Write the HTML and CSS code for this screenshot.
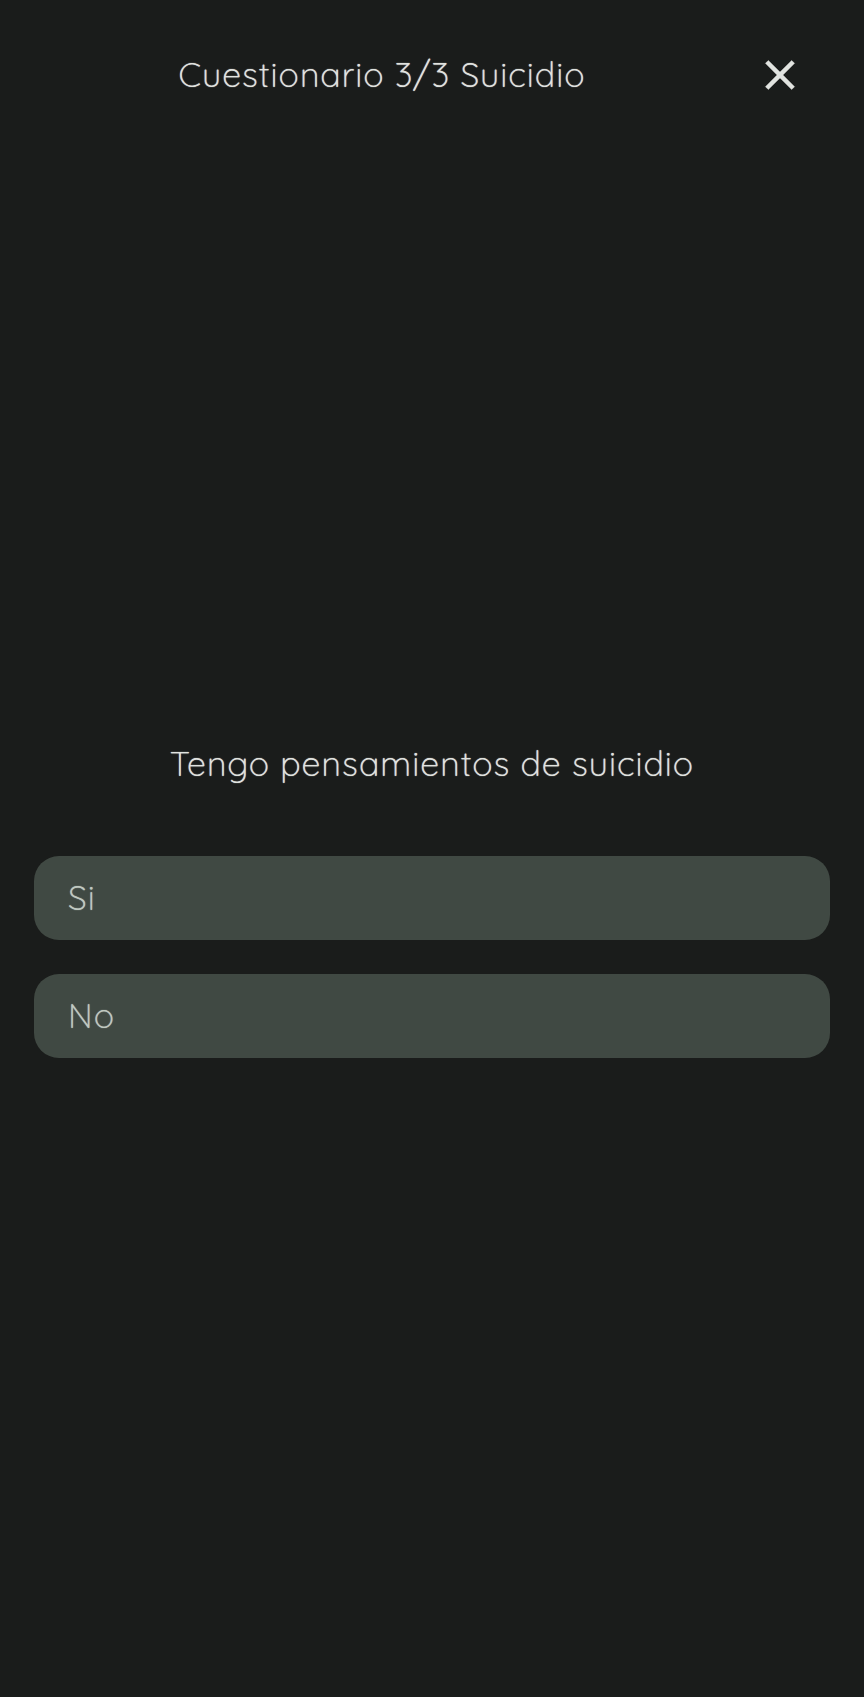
FILE: index.html
```html
<!DOCTYPE html>
<html lang="es">
<head>
<meta charset="utf-8">
<meta name="viewport" content="width=device-width, initial-scale=1">
<title>Cuestionario 3/3 Suicidio</title>
<link rel="stylesheet" href="styles.css">
</head>
<body>
<header class="top-bar">
  <h1 class="title">Cuestionario 3/3 Suicidio</h1>
  <button class="close" type="button" aria-label="Cerrar">
    <svg class="close-icon" viewBox="0 0 24 24" aria-hidden="true"><path d="M19 6.41 17.59 5 12 10.59 6.41 5 5 6.41 10.59 12 5 17.59 6.41 19 12 13.41 17.59 19 19 17.59 13.41 12z"/></svg>
  </button>
</header>
<main class="question">
  <h2 class="prompt">Tengo pensamientos de suicidio</h2>
  <div class="answers">
    <button class="answer" type="button">Si</button>
    <button class="answer" type="button">No</button>
  </div>
</main>
</body>
</html>
```
FILE: styles.css
```css
* {
  box-sizing: border-box;
}

body {
  margin: 0;
  min-height: 100vh;
  display: flex;
  flex-direction: column;
  background: #1a1c1b;
  color: #e1e3e0;
  font-family: Quicksand, Lato, sans-serif;
  font-size: 34px;
  font-weight: 300;
  line-height: 48px;
}

.top-bar {
  display: flex;
  align-items: center;
  padding: 24px 34px;
}

.title,
.prompt,
.answer {
  letter-spacing: 1px;
  text-shadow: 0 0 1px currentColor;
}

.title,
.prompt {
  margin: 0;
  font-size: inherit;
  font-weight: inherit;
  text-align: center;
}

.title {
  flex: 1;
}

.close {
  display: flex;
  align-items: center;
  justify-content: center;
  width: 100px;
  height: 102px;
  padding: 0;
  border: 0;
  background: none;
  color: inherit;
}

.close-icon {
  width: 50px;
  height: 50px;
  fill: currentColor;
  stroke: currentColor;
  stroke-width: 0.2;
  stroke-linejoin: round;
}

.question {
  flex: 1;
  display: flex;
  flex-direction: column;
  justify-content: center;
  gap: 68px;
  padding: 0 34px 50px;
}

.answers {
  display: flex;
  flex-direction: column;
  gap: 34px;
}

.answer {
  height: 84px;
  padding: 0 34px;
  border: 0;
  border-radius: 25px;
  background: #404943;
  color: #c0c9c1;
  font: inherit;
  text-align: left;
}
```
